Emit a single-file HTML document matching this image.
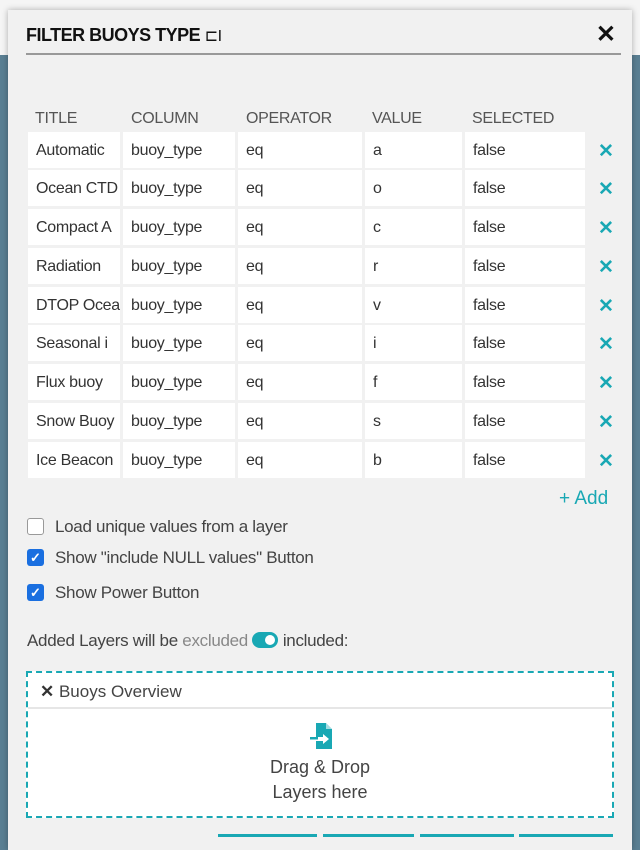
<!DOCTYPE html>
<html><head><style>
*{box-sizing:border-box;margin:0;padding:0}
body{width:640px;height:837px;overflow:hidden;position:relative;font-family:"Liberation Sans",sans-serif;color:#333;background:#5a7f93}
.topbg{position:absolute;left:0;top:0;width:640px;height:55px;background:#f5f5f5}
.panel{position:absolute;left:8px;top:10px;width:624px;height:840px;background:#f1f1f1;box-shadow:0 0 6px rgba(0,0,0,.3)}
.title{position:absolute;left:18px;top:15px;font-size:18px;font-weight:bold;color:#111;letter-spacing:-0.5px}
.close{position:absolute;right:16px;top:10px;font-size:24px;font-weight:bold;color:#111}
.hr{position:absolute;left:18px;top:43px;width:595px;height:2px;background:#999}
.th{position:absolute;top:100px;font-size:16px;color:#555;letter-spacing:-0.3px}
.cell{position:absolute;height:36px;background:#fff;font-size:16px;line-height:38px;padding-left:8px;overflow:hidden;white-space:nowrap;color:#333;letter-spacing:-0.3px}
.x{position:absolute;font-size:19px;font-weight:bold;color:#19a8b4}
.cb{position:absolute;left:18px;width:17px;height:17px;border-radius:3px}
.lbl{position:absolute;left:47px;font-size:17px;color:#444;letter-spacing:-0.3px}
.drop{position:absolute;border:2px dashed #19a8b4;background:#fff}
.btn{position:absolute;top:834px;height:3px;background:#19a8b4}
</style></head><body>
<div class="topbg"></div>
<div class="panel">
<div class="title">FILTER BUOYS TYPE <span style="font-weight:normal;font-size:16px">⊏I</span></div>
<div class="close">✕</div>
<div class="hr"></div>
<div class="th" style="left:27px">TITLE</div>
<div class="th" style="left:123px">COLUMN</div>
<div class="th" style="left:238px">OPERATOR</div>
<div class="th" style="left:364px">VALUE</div>
<div class="th" style="left:464px">SELECTED</div>
</div>
<div class="cell" style="left:28px;top:132px;width:92px">Automatic</div><div class="cell" style="left:123px;top:132px;width:112px">buoy_type</div><div class="cell" style="left:238px;top:132px;width:124px">eq</div><div class="cell" style="left:365px;top:132px;width:97px">a</div><div class="cell" style="left:465px;top:132px;width:120px">false</div><div class="x" style="left:598px;top:140px">✕</div>
<div class="cell" style="left:28px;top:170px;width:92px">Ocean CTD</div><div class="cell" style="left:123px;top:170px;width:112px">buoy_type</div><div class="cell" style="left:238px;top:170px;width:124px">eq</div><div class="cell" style="left:365px;top:170px;width:97px">o</div><div class="cell" style="left:465px;top:170px;width:120px">false</div><div class="x" style="left:598px;top:178px">✕</div>
<div class="cell" style="left:28px;top:209px;width:92px">Compact A</div><div class="cell" style="left:123px;top:209px;width:112px">buoy_type</div><div class="cell" style="left:238px;top:209px;width:124px">eq</div><div class="cell" style="left:365px;top:209px;width:97px">c</div><div class="cell" style="left:465px;top:209px;width:120px">false</div><div class="x" style="left:598px;top:217px">✕</div>
<div class="cell" style="left:28px;top:248px;width:92px">Radiation</div><div class="cell" style="left:123px;top:248px;width:112px">buoy_type</div><div class="cell" style="left:238px;top:248px;width:124px">eq</div><div class="cell" style="left:365px;top:248px;width:97px">r</div><div class="cell" style="left:465px;top:248px;width:120px">false</div><div class="x" style="left:598px;top:256px">✕</div>
<div class="cell" style="left:28px;top:287px;width:92px">DTOP Ocean</div><div class="cell" style="left:123px;top:287px;width:112px">buoy_type</div><div class="cell" style="left:238px;top:287px;width:124px">eq</div><div class="cell" style="left:365px;top:287px;width:97px">v</div><div class="cell" style="left:465px;top:287px;width:120px">false</div><div class="x" style="left:598px;top:295px">✕</div>
<div class="cell" style="left:28px;top:325px;width:92px">Seasonal i</div><div class="cell" style="left:123px;top:325px;width:112px">buoy_type</div><div class="cell" style="left:238px;top:325px;width:124px">eq</div><div class="cell" style="left:365px;top:325px;width:97px">i</div><div class="cell" style="left:465px;top:325px;width:120px">false</div><div class="x" style="left:598px;top:333px">✕</div>
<div class="cell" style="left:28px;top:364px;width:92px">Flux buoy</div><div class="cell" style="left:123px;top:364px;width:112px">buoy_type</div><div class="cell" style="left:238px;top:364px;width:124px">eq</div><div class="cell" style="left:365px;top:364px;width:97px">f</div><div class="cell" style="left:465px;top:364px;width:120px">false</div><div class="x" style="left:598px;top:372px">✕</div>
<div class="cell" style="left:28px;top:403px;width:92px">Snow Buoy</div><div class="cell" style="left:123px;top:403px;width:112px">buoy_type</div><div class="cell" style="left:238px;top:403px;width:124px">eq</div><div class="cell" style="left:365px;top:403px;width:97px">s</div><div class="cell" style="left:465px;top:403px;width:120px">false</div><div class="x" style="left:598px;top:411px">✕</div>
<div class="cell" style="left:28px;top:442px;width:92px">Ice Beacon</div><div class="cell" style="left:123px;top:442px;width:112px">buoy_type</div><div class="cell" style="left:238px;top:442px;width:124px">eq</div><div class="cell" style="left:365px;top:442px;width:97px">b</div><div class="cell" style="left:465px;top:442px;width:120px">false</div><div class="x" style="left:598px;top:450px">✕</div>
<div style="position:absolute;left:559px;top:488px;font-size:19px;color:#19a8b4">+ Add</div>
<div class="cb" style="left:27px;top:518px;border:1px solid #999;background:#fff"></div>
<div class="lbl" style="left:55px;top:517px">Load unique values from a layer</div>
<div class="cb" style="left:27px;top:549px;background:#1a6fe0;color:#fff;font-size:13px;line-height:17px;text-align:center;font-weight:bold">✓</div>
<div class="lbl" style="left:55px;top:548px">Show "include NULL values" Button</div>
<div class="cb" style="left:27px;top:584px;background:#1a6fe0;color:#fff;font-size:13px;line-height:17px;text-align:center;font-weight:bold">✓</div>
<div class="lbl" style="left:55px;top:583px">Show Power Button</div>
<div class="lbl" style="left:27px;top:631px">Added Layers will be <span style="color:#888">excluded</span> <span style="display:inline-block;width:26px;height:16px;border-radius:8px;background:#19a8b4;vertical-align:-2px;position:relative"><span style="position:absolute;right:3px;top:3px;width:10px;height:10px;border-radius:5px;background:#fff"></span></span> included:</div>
<div class="drop" style="left:26px;top:671px;width:588px;height:147px">
<div style="height:36px;border-bottom:2px solid #e6e6e6;font-size:17px;line-height:38px;padding-left:12px;color:#444"><b style="color:#333">✕</b> Buoys Overview</div>
<svg style="position:absolute;left:282px;top:50px" width="24" height="26" viewBox="0 0 24 26"><path d="M6 0h10l6 6v20H6v-8h7v3l6-5-6-5v3H6z" fill="#19a8b4"/><path d="M16 0v6h6" fill="#fff" opacity=".6"/><rect x="0" y="14" width="8" height="2.5" fill="#19a8b4"/></svg>
<div style="position:absolute;left:0;right:0;top:82px;text-align:center;font-size:18px;line-height:25px;color:#444">Drag &amp; Drop<br>Layers here</div>
</div>
<div class="btn" style="left:218px;width:99px"></div>
<div class="btn" style="left:323px;width:91px"></div>
<div class="btn" style="left:420px;width:94px"></div>
<div class="btn" style="left:519px;width:94px"></div>
</body></html>
